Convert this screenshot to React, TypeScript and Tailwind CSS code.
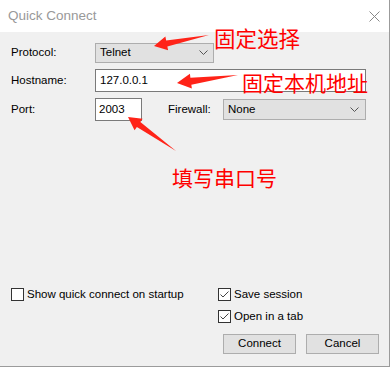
import React from "react";

const ui = { fontFamily: '"Liberation Sans", Arial, sans-serif' };
const cjk = { fontFamily: '"Noto Sans CJK SC", "Noto Sans", sans-serif' };

// tapered annotation arrow, tail -> tip
const arrowPoints = (tx: number, ty: number, px: number, py: number, head = 13, barb = 7, neck = 3) => {
  const dx = px - tx;
  const dy = py - ty;
  const len = Math.hypot(dx, dy);
  const ux = dx / len;
  const uy = dy / len;
  const nx = -uy;
  const ny = ux;
  const bx = px - ux * head;
  const by = py - uy * head;
  const pts = [
    [px, py],
    [bx + nx * barb, by + ny * barb],
    [bx + nx * neck, by + ny * neck],
    [tx, ty],
    [bx - nx * neck, by - ny * neck],
    [bx - nx * barb, by - ny * barb],
  ];
  return pts.map((p) => p.join(",")).join(" ");
};

const Chevron = () => (
  <svg width="9" height="6" viewBox="0 0 9 6" className="shrink-0">
    <path d="M0.5 0.5 L4.5 4.5 L8.5 0.5" fill="none" stroke="#555" strokeWidth="1" />
  </svg>
);

const Checkbox = ({ checked, label }: { checked?: boolean; label: string }) => (
  <div className="flex items-center h-[13px] gap-[3px]">
    <div className="w-[13px] h-[13px] border border-[#333] bg-white flex items-center justify-center">
      {checked && (
        <svg width="11" height="11" viewBox="0 0 11 11">
          <path d="M1.5 5.5 L4 8 L9.5 2.5" fill="none" stroke="#444" strokeWidth="1" />
        </svg>
      )}
    </div>
    <span className="text-[11.5px] text-black leading-none">{label}</span>
  </div>
);

export default function App() {
  return (
    <div className="w-[391px] h-[368px] bg-white" style={ui}>
      <div className="relative w-[390px] h-[367px] flex flex-col bg-[#f0f0f0] border-r border-b border-[#9b9b9b]">
        {/* title bar */}
        <div className="h-[32px] bg-white flex items-center justify-between pl-[8px] pr-[9px]">
          <span className="text-[13.5px] text-[#999]">Quick Connect</span>
          <svg width="11" height="11" viewBox="0 0 11 11">
            <path d="M0.5 0.5 L10.5 10.5 M10.5 0.5 L0.5 10.5" stroke="#888" strokeWidth="1" />
          </svg>
        </div>

        {/* body */}
        <div className="flex-1 flex flex-col pl-[11px] pr-[10px] pt-[11px] pb-[12px]">
          <div className="flex flex-col gap-[6px] text-[11.5px] text-black">
            <div className="flex items-center">
              <span className="w-[84px]">Protocol:</span>
              <div className="w-[119px] h-[20px] bg-[#e1e1e1] border border-[#adadad] flex items-center justify-between pl-[4px] pr-[5px]">
                <span>Telnet</span>
                <Chevron />
              </div>
            </div>
            <div className="flex items-center">
              <span className="w-[84px]">Hostname:</span>
              <div className="w-[271px] h-[23px] bg-white border border-[#7a7a7a] flex items-center pl-[4px]">
                127.0.0.1
              </div>
            </div>
            <div className="flex items-center">
              <span className="w-[84px]">Port:</span>
              <div className="w-[47px] h-[23px] bg-white border border-[#7a7a7a] flex items-center pl-[3px]">
                2003
              </div>
              <span className="ml-[26px] w-[55px]">Firewall:</span>
              <div className="w-[143px] h-[21px] bg-[#e1e1e1] border border-[#adadad] flex items-center justify-between pl-[4px] pr-[6px]">
                <span>None</span>
                <Chevron />
              </div>
            </div>
          </div>

          <div className="flex-1" />

          <div className="flex justify-between">
            <Checkbox label="Show quick connect on startup" />
            <div className="w-[161px] flex flex-col">
              <div className="flex flex-col gap-[9px]">
                <Checkbox checked label="Save session" />
                <Checkbox checked label="Open in a tab" />
              </div>
              <div className="flex gap-[10px] ml-[5px] mt-[11px] text-[11.5px]">
                <button className="w-[73px] h-[20px] bg-[#e1e1e1] border border-[#adadad] text-black">Connect</button>
                <button className="w-[73px] h-[20px] bg-[#e1e1e1] border border-[#adadad] text-black">Cancel</button>
              </div>
            </div>
          </div>
        </div>

        {/* red annotations */}
        <svg className="absolute left-0 top-0 pointer-events-none" width="390" height="367">
          <polygon points={arrowPoints(209, 35, 154, 46)} fill="#ff2318" />
          <polygon points={arrowPoints(238, 75, 177, 83, 14, 7.5, 3.5)} fill="#ff2318" />
          <polygon points={arrowPoints(176, 151, 128, 117)} fill="#ff2318" />
        </svg>
        <span className="absolute left-[214px] top-[24px] text-[21.5px] leading-[28px] text-[#ff0000]" style={cjk}>固定选择</span>
        <span className="absolute left-[242px] top-[68px] text-[21px] leading-[28px] text-[#ff0000]" style={cjk}>固定本机地址</span>
        <span className="absolute left-[172px] top-[163px] text-[21px] leading-[28px] text-[#ff0000]" style={cjk}>填写串口号</span>
      </div>
    </div>
  );
}
